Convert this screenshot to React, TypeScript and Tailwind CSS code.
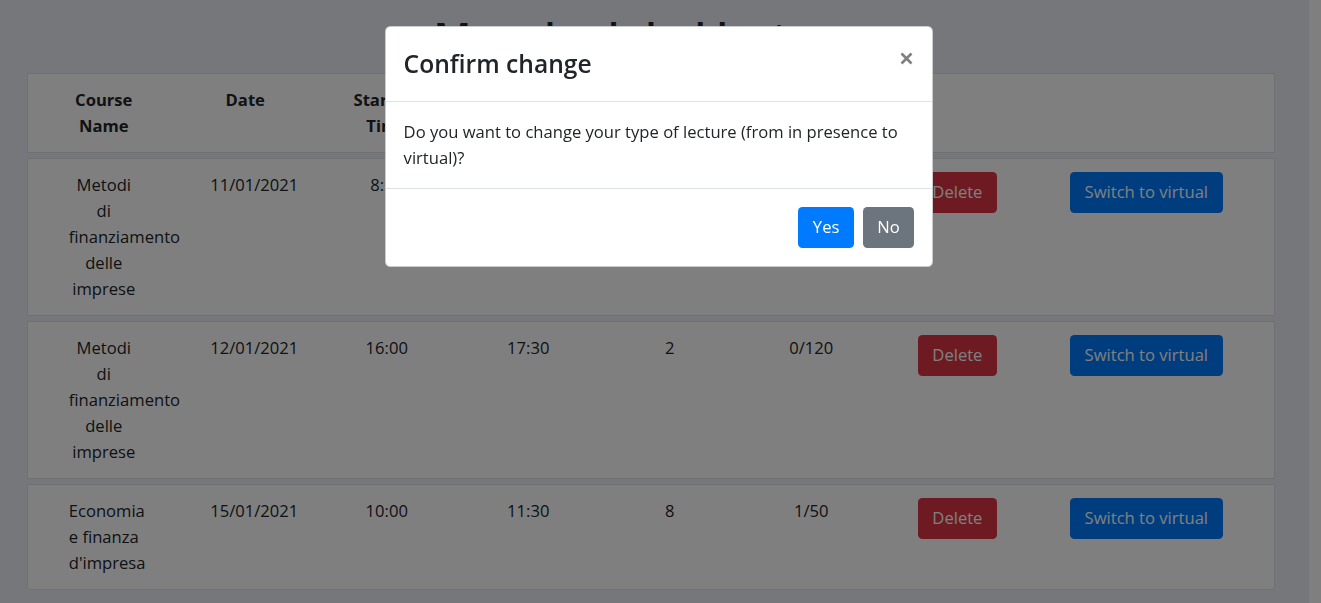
import React from "react";

interface Lecture {
  course: string[];
  date: string;
  start: string;
  end: string;
  room: string;
  seats: string;
}

const lectures: Lecture[] = [
  {
    course: ["Metodi", "di", "finanziamento", "delle", "imprese"],
    date: "11/01/2021",
    start: "8:30",
    end: "10:00",
    room: "1",
    seats: "0/100",
  },
  {
    course: ["Metodi", "di", "finanziamento", "delle", "imprese"],
    date: "12/01/2021",
    start: "16:00",
    end: "17:30",
    room: "2",
    seats: "0/120",
  },
  {
    course: ["Economia", "e finanza", "d'impresa"],
    date: "15/01/2021",
    start: "10:00",
    end: "11:30",
    room: "8",
    seats: "1/50",
  },
];

// only the headers not covered by the dialog
const headers: string[][] = [["Course", "Name"], ["Date"], ["Starting", "Time"], [], [], [], [], []];

function Cell({ children }: { children?: React.ReactNode }) {
  return (
    <div className="py-[13px]">
      <div className="w-[70px] mx-auto text-center">{children}</div>
    </div>
  );
}

function Lines({ lines }: { lines: string[] }) {
  return (
    <>
      {lines.map((l, i) => (
        <div key={i} className="whitespace-nowrap">
          {l}
        </div>
      ))}
    </>
  );
}

const rowClass =
  "grid grid-cols-[repeat(7,141.5px)_163px] pl-[5px] bg-white border border-[#dfe1e5]";

const btn =
  "inline-block whitespace-nowrap text-white text-[16.6px] leading-[26.4px] px-[13.6px] py-[6.6px] border border-transparent rounded-[4.4px]";

export default function App() {
  return (
    <div className="relative flex min-h-screen font-['Open_Sans','Noto_Sans',sans-serif] text-[#212529] text-[16.6px] leading-[26px]">
      <div className="w-[1309px] min-h-[603px] bg-[#eceef4] pt-[11px] pb-[20px]">
        <h1 className="text-center text-[41px] leading-[52.8px] font-semibold mb-[9px]">
          My scheduled lectures
        </h1>
        <div className="ml-[27px] w-[1248px] flex flex-col gap-[5px]">
          <div className={rowClass}>
            {headers.map((h, i) => (
              <Cell key={i}>
                <div className="font-bold">
                  <Lines lines={h} />
                </div>
              </Cell>
            ))}
          </div>
          {lectures.map((l, i) => (
            <div
              key={i}
              className={rowClass + (i === lectures.length - 1 ? " rounded-b-[4px]" : "")}
            >
              <Cell>
                <Lines lines={l.course} />
              </Cell>
              <Cell>{l.date}</Cell>
              <Cell>{l.start}</Cell>
              <Cell>{l.end}</Cell>
              <Cell>{l.room}</Cell>
              <Cell>{l.seats}</Cell>
              <Cell>
                <button className={btn + " bg-[#dc3545]"}>Delete</button>
              </Cell>
              <Cell>
                <button className={btn + " bg-[#007bff]"}>Switch to virtual</button>
              </Cell>
            </div>
          ))}
        </div>
      </div>
      <div className="flex-1 bg-white" />

      {/* modal backdrop + dialog */}
      <div className="fixed inset-0 bg-black/50" />
      <div className="fixed inset-0">
        <div className="ml-[385px] mt-[26px] w-[548px] bg-white border border-black/20 rounded-[5.3px]">
          <div className="flex items-start justify-between px-[17.6px] py-[17px] border-b border-[#dee2e6]">
            <div className="text-[24.6px] leading-[39.6px] font-semibold">Confirm change</div>
            <button className="mt-[8px] mr-[1px] text-black/50">
              <svg width="13" height="13" viewBox="0 0 13 13">
                <path
                  d="M1.5 1.5 L11.5 11.5 M11.5 1.5 L1.5 11.5"
                  stroke="currentColor"
                  strokeWidth="2.6"
                />
              </svg>
            </button>
          </div>
          <div className="px-[17.6px] py-[17.3px] border-b border-[#dee2e6]">
            Do you want to change your type of lecture (from in presence to virtual)?
          </div>
          <div className="flex justify-end px-[13.2px] py-[13px]">
            <button className={btn + " m-[4.4px] bg-[#007bff]"}>Yes</button>
            <button className={btn + " m-[4.4px] bg-[#6c757d]"}>No</button>
          </div>
        </div>
      </div>
    </div>
  );
}
